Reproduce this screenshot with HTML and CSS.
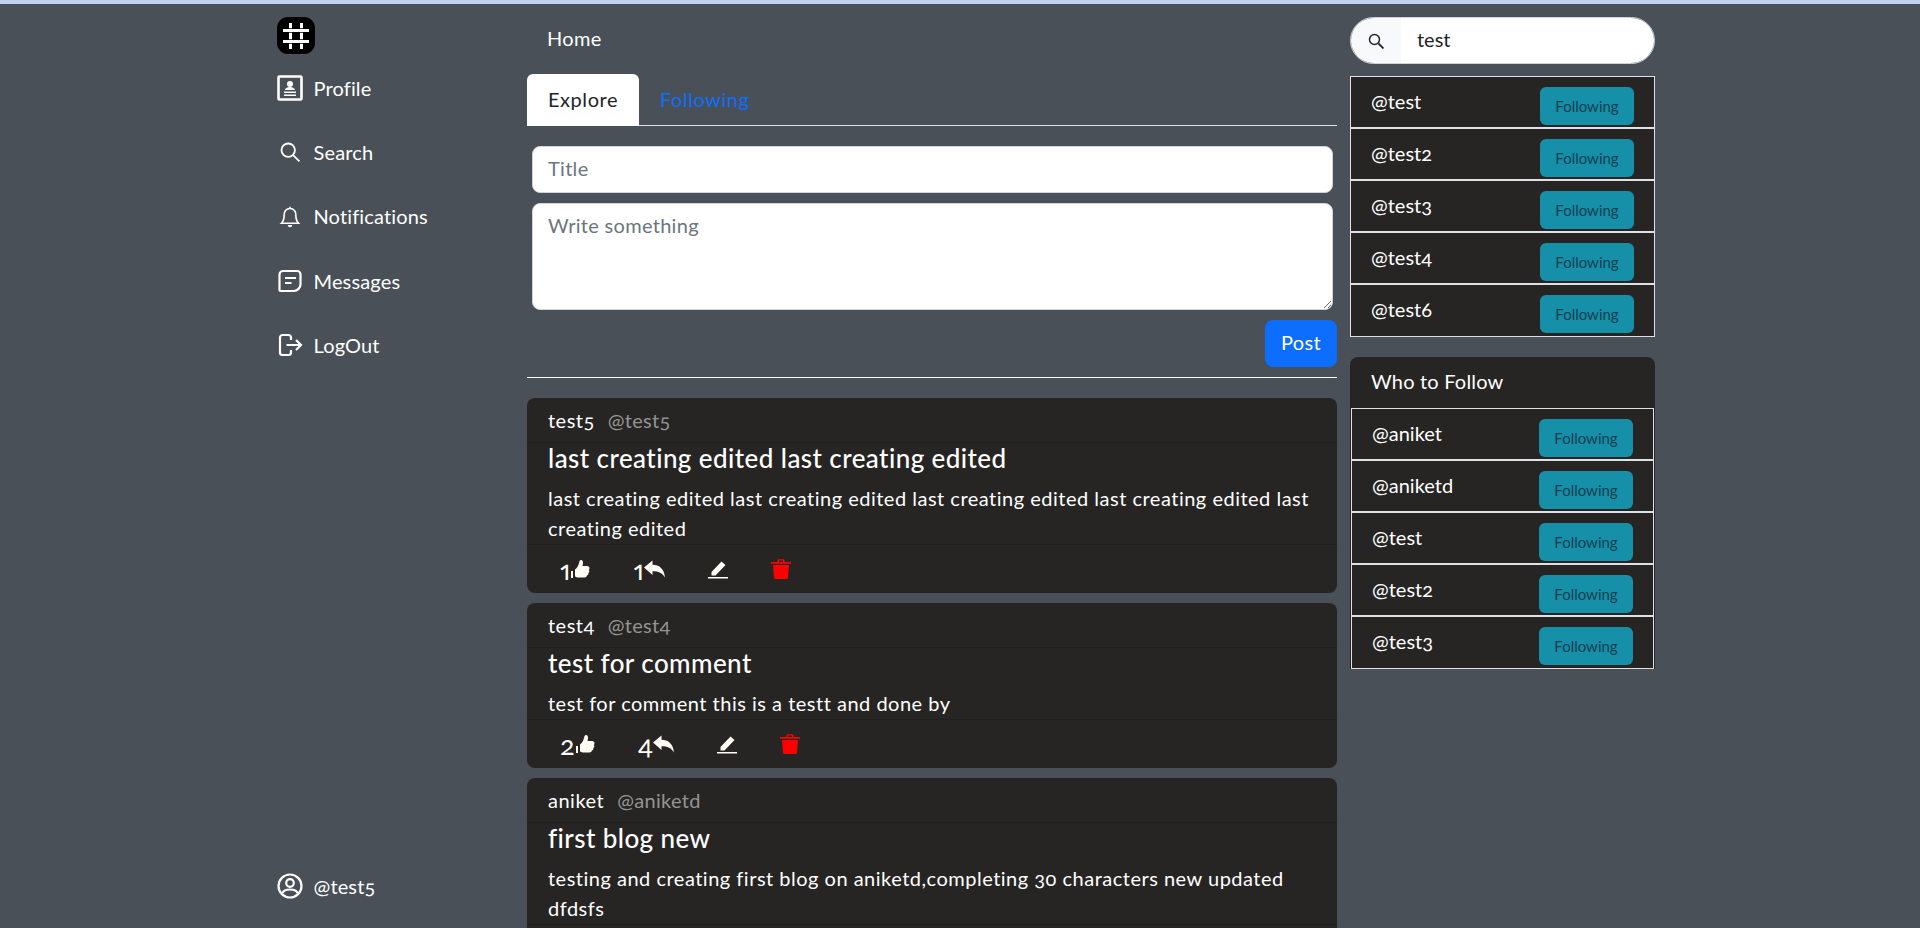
FILE: index.html
```html
<!DOCTYPE html>
<html>
  <head>
    <title>Home</title>
    <link rel="stylesheet" href="styles.css">
  </head>
  <body>
    <div class="topstrip"></div>
    <div class="layout">
      <nav class="sidebar">
        <div class="logo">
          <svg viewBox="0 0 38 38" width="38" height="38"><path d="M13.500 6v26M24.500 6v26" stroke="#fff" stroke-width="3" fill="none"/><path d="M5 13.500h28M5 24.500h28" stroke="#000" stroke-width="4.400" fill="none"/><path d="M6 13.500h26M6 24.500h26" stroke="#fff" stroke-width="3" fill="none"/></svg>
        </div>
        <a class="navitem">
          <svg viewBox="0 0 26 26" width="26" height="26"><rect x="1.500" y="1.500" width="23" height="23" fill="none" stroke="#fff" stroke-width="2.600" rx="1"/><circle cx="13" cy="9" r="3" fill="#fff"/><path d="M8 15c0-2 3-3 5-3s5 1 5 3zM7 16.500h12v1.500H7zM7 19.500h12v1.500H7z" fill="#fff"/></svg>
          <span>Profile</span>
        </a>
        <a class="navitem">
          <svg viewBox="-1.500 -1.500 29 29" width="26" height="26"><circle cx="11" cy="11" r="7.500" fill="none" stroke="#fff" stroke-width="2"/><path d="M16.500 16.500l7 7" stroke="#fff" stroke-width="2" fill="none"/></svg>
          <span>Search</span>
        </a>
        <a class="navitem">
          <svg viewBox="-1.500 -1.500 29 29" width="26" height="26"><path d="M13 3.500c-4 0-6.500 3-6.500 7 0 5-1 7.500-3 9.500h19c-2-2-3-4.500-3-9.500 0-4-2.500-7-6.500-7zM13 1.500v2" fill="none" stroke="#fff" stroke-width="1.800"/><path d="M10.500 22a2.500 2.500 0 0 0 5 0z" fill="#fff"/></svg>
          <span>Notifications</span>
        </a>
        <a class="navitem">
          <svg viewBox="0 0 26 26" width="26" height="26"><path d="M6 3h14a3.500 3.500 0 0 1 3.500 3.500v10c0 3-3 6.500-6.500 6.500H3.500a1 1 0 0 1-1-1V6.500A3.500 3.500 0 0 1 6 3z" fill="none" stroke="#fff" stroke-width="2.200"/><path d="M8 10h11M8 15h6.500" stroke="#fff" stroke-width="2.200" fill="none"/></svg>
          <span>Messages</span>
        </a>
        <a class="navitem">
          <svg viewBox="0 0 26 26" width="26" height="26"><path d="M14 8V5.500A2.500 2.500 0 0 0 11.500 3h-6A2.500 2.500 0 0 0 3 5.500v15A2.500 2.500 0 0 0 5.500 23h6a2.500 2.500 0 0 0 2.500-2.500V18M9.500 13h14.500M19 8l5 5-5 5" fill="none" stroke="#fff" stroke-width="2.200"/></svg>
          <span>LogOut</span>
        </a>
        <a class="navitem account">
          <svg viewBox="0 0 26 26" width="26" height="26"><circle cx="13" cy="13" r="11.500" fill="none" stroke="#fff" stroke-width="2.200"/><circle cx="13" cy="10" r="3.800" fill="none" stroke="#fff" stroke-width="2.200"/><path d="M5.500 20c1-2.500 4-3.500 7.500-3.500s6.500 1 7.500 3.500" fill="none" stroke="#fff" stroke-width="2.200"/></svg>
          <span>@test5</span>
        </a>
      </nav>

      <main class="feed">
        <div class="pagetitle">Home</div>
        <ul class="tabs">
          <li class="tab active">Explore</li>
          <li class="tab">Following</li>
        </ul>
        <form class="composer">
          <input class="field" type="text" placeholder="Title">
          <textarea class="field area" placeholder="Write something"></textarea>
          <div class="composer-foot"><button class="postbtn" type="button">Post</button></div>
        </form>
        <hr class="rule">

        <article class="card">
          <header class="card-head"><span class="author">test5</span><span class="handle">@test5</span></header>
          <div class="card-body">
            <h5>last creating edited last creating edited</h5>
            <p>last creating edited last creating edited last creating edited last creating edited last creating edited</p>
          </div>
          <footer class="card-foot">
            <span class="action">1<svg viewBox="0 0 20 20" width="20" height="20"><use href="#thumb"/></svg></span>
            <span class="action">1<svg viewBox="0 0 21 20" width="21" height="20"><use href="#reply"/></svg></span>
            <span class="action"><svg viewBox="0 0 20 20" width="20" height="20"><use href="#pen"/></svg></span>
            <span class="action"><svg viewBox="0 0 20 20" width="20" height="20"><use href="#trash"/></svg></span>
          </footer>
        </article>

        <article class="card">
          <header class="card-head"><span class="author">test4</span><span class="handle">@test4</span></header>
          <div class="card-body">
            <h5>test for comment</h5>
            <p>test for comment this is a testt and done by</p>
          </div>
          <footer class="card-foot">
            <span class="action">2<svg viewBox="0 0 20 20" width="20" height="20"><use href="#thumb"/></svg></span>
            <span class="action">4<svg viewBox="0 0 21 20" width="21" height="20"><use href="#reply"/></svg></span>
            <span class="action"><svg viewBox="0 0 20 20" width="20" height="20"><use href="#pen"/></svg></span>
            <span class="action"><svg viewBox="0 0 20 20" width="20" height="20"><use href="#trash"/></svg></span>
          </footer>
        </article>

        <article class="card">
          <header class="card-head"><span class="author">aniket</span><span class="handle">@aniketd</span></header>
          <div class="card-body">
            <h5>first blog new</h5>
            <p>testing and creating first blog on aniketd,completing 30 characters new updated dfdsfs</p>
          </div>
          <footer class="card-foot"></footer>
        </article>
      </main>

      <aside class="rightbar">
        <div class="searchbox">
          <span class="searchicon"><svg viewBox="0 0 16 16" width="16" height="16"><circle cx="6.500" cy="6.500" r="5" fill="none" stroke="#212529" stroke-width="1.500"/><path d="M10.500 10.500l5 5" stroke="#212529" stroke-width="1.800"/></svg></span>
          <input class="searchinput" type="text" value="test">
        </div>
        <ul class="userlist">
          <li class="userrow"><span>@test</span><button class="followbtn" type="button">Following</button></li>
          <li class="userrow"><span>@test2</span><button class="followbtn" type="button">Following</button></li>
          <li class="userrow"><span>@test3</span><button class="followbtn" type="button">Following</button></li>
          <li class="userrow"><span>@test4</span><button class="followbtn" type="button">Following</button></li>
          <li class="userrow"><span>@test6</span><button class="followbtn" type="button">Following</button></li>
        </ul>
        <section class="whocard">
          <div class="whotitle">Who to Follow</div>
          <ul class="userlist inner">
            <li class="userrow"><span>@aniket</span><button class="followbtn" type="button">Following</button></li>
            <li class="userrow"><span>@aniketd</span><button class="followbtn" type="button">Following</button></li>
            <li class="userrow"><span>@test</span><button class="followbtn" type="button">Following</button></li>
            <li class="userrow"><span>@test2</span><button class="followbtn" type="button">Following</button></li>
            <li class="userrow"><span>@test3</span><button class="followbtn" type="button">Following</button></li>
          </ul>
        </section>
      </aside>
    </div>

    <svg class="defs" width="0" height="0">
      <symbol id="thumb" viewBox="0 0 20 20"><path d="M1 12h2v7H1z" fill="#fffdf5"/><path d="M5 10.500c2-1.500 3.500-4 4-6.500.300-2 1-3 2-3 1.500 0 2.200 1.500 2 3.500l-.5 2.500h4.500c1.500 0 2.500 1 2.500 2.200 0 .8-.3 1.300-.7 1.700.4.500.6 1 .5 1.600-.1.700-.5 1.200-1 1.500.2.600.1 1.200-.3 1.700-.3.400-.7.700-1.200.8 0 1.300-1 2-2.300 2H9c-1.800 0-3-.5-4-1z" fill="#fffdf5"/></symbol>
      <symbol id="reply" viewBox="0 0 21 20"><path d="M0 8.500L8.500 1.500v4.300c6.500 0 11.500 3.500 12.500 12.700-2.500-4.500-6.500-6.300-12.500-6.300v3.800z" fill="#fffdf5"/></symbol>
      <symbol id="pen" viewBox="0 0 20 20"><path d="M3.500 13L13.500 2.500l4 3.500-10 10.500H3.500zM0 18h20v1.500H0z" fill="#fffdf5"/></symbol>
      <symbol id="trash" viewBox="0 0 20 20"><path d="M0 3h6.500V1.800C6.500 .8 7 .3 8 .3h4c1 0 1.500 .5 1.500 1.500V3H20v1.800H0zM8 1.600V3h4V1.600z" fill="#f00"/><path d="M2 6h16l-1 12.500c-.1 1-.7 1.500-1.500 1.500h-11c-.8 0-1.400-.5-1.500-1.500z" fill="#f00"/></symbol>
    </svg>
  </body>
</html>
```

FILE: styles.css
```css
* {
  box-sizing: border-box;
}

html, body {
  height: 928px;
  overflow: hidden;
}

body {
  margin: 0;
  background-color: #495057;
  color: #fff;
  font-family: "Lato", "Open Sans", sans-serif;
  font-size: 20px;
  font-variant-numeric: oldstyle-nums;
}

.topstrip {
  height: 4px;
  background-color: #bed3f0;
}

.defs {
  position: absolute;
}

.layout {
  width: 1390px;
  margin: 0 auto;
  display: grid;
  grid-template-columns: 262px 810px 318px;
  height: 924px;
}

/* left nav */
.sidebar {
  display: flex;
  flex-direction: column;
  padding: 13px 12px 0 12px;
  height: 100%;
}

.logo {
  width: 38px;
  height: 37px;
  background-color: #000;
  border-radius: 11px;
  margin-bottom: 2px;
  display: flex;
  align-items: center;
  justify-content: center;
}

.navitem {
  display: flex;
  align-items: center;
  gap: 10.500px;
  height: 64.300px;
  letter-spacing: 0.15px;
}

.navitem span {
  padding-bottom: 1px;
}

.navitem svg {
  flex: none;
}

.account {
  margin-top: auto;
  margin-bottom: 10px;
  height: 64px;
}

/* middle */
.feed {
  overflow: hidden;
  letter-spacing: 0.3px;
}

.pagetitle {
  padding: 22px 20px 0;
  height: 70px;
  line-height: 24px;
}

.tabs {
  list-style: none;
  margin: 0;
  padding: 0;
  display: flex;
  border-bottom: 1px solid #dee2e6;
  height: 52px;
}

.tab {
  padding: 0 21px;
  height: 52px;
  line-height: 50px;
  color: #0d6efd;
  letter-spacing: 0.55px;
}

.tab.active {
  background-color: #fff;
  color: #212529;
  border-radius: 6px 6px 0 0;
}

.composer {
  padding: 20px 4px 0 5px;
}

.field {
  display: block;
  width: 100%;
  height: 47px;
  border: 1px solid #ced4da;
  border-radius: 8px;
  padding: 0 15px 4px;
  font-family: inherit;
  font-size: 20px;
  letter-spacing: 0.3px;
  color: #212529;
  margin-bottom: 10px;
}

.field::placeholder {
  color: #6c757d;
}

.area {
  height: 107px;
  padding-top: 9px;
  resize: vertical;
}

.composer-foot {
  display: flex;
  justify-content: flex-end;
  margin-right: -4px;
}

.postbtn {
  width: 72px;
  height: 47px;
  border: 0;
  border-radius: 8px;
  padding: 0 0 4px;
  background-color: #0d6efd;
  color: #fff;
  font-family: inherit;
  font-size: 20px;
  letter-spacing: 0.3px;
}

.rule {
  border: 0;
  border-top: 1px solid #fff;
  margin: 10px 0 20px;
}

.card {
  background-color: #262524;
  border-radius: 8px;
  margin-bottom: 10px;
}

.card-head {
  height: 45px;
  padding: 0 21px;
  display: flex;
  align-items: center;
  gap: 13px;
  border-bottom: 1px solid #1f1f1e;
}

.author {
  letter-spacing: 0.5px;
}

.handle {
  color: #949492;
}

.card-body {
  padding: 0 21px;
}

.card-body h5 {
  margin: 0 0 10px;
  font-size: 26px;
  font-weight: 500;
  line-height: 30px;
  letter-spacing: 0.42px;
}

.card-body p {
  margin: 0;
  line-height: 30px;
  padding-bottom: 1px;
  letter-spacing: 0.5px;
}

.card-foot {
  height: 49px;
  border-top: 1px solid #1f1f1e;
  padding: 0 0 0 33px;
  display: flex;
  align-items: center;
  gap: 43px;
}

.action {
  display: flex;
  align-items: center;
  color: #fffdf5;
  font-size: 27px;
  line-height: 1;
  font-variant-numeric: oldstyle-nums proportional-nums;
  letter-spacing: 0;
}

/* right */
.rightbar {
  padding: 13px 0 0 13px;
}

.searchbox {
  display: flex;
  height: 47px;
  border-radius: 24px;
  border: 1px solid #ced4da;
  overflow: hidden;
  margin-bottom: 12px;
}

.searchicon {
  width: 50px;
  background-color: #f8f9fa;
  display: flex;
  align-items: center;
  justify-content: center;
}

.searchinput {
  flex: 1;
  min-width: 0;
  border: 0;
  padding: 0 16px 3px;
  font-family: inherit;
  font-size: 20px;
  color: #212529;
  font-variant-numeric: oldstyle-nums;
}

.userlist {
  list-style: none;
  margin: 0;
  padding: 0;
  border: 1px solid #dee2e6;
  border-bottom-width: 0;
  background-color: #262524;
}

.userrow {
  height: 52px;
  padding: 10px 20px 0 20px;
  display: flex;
  justify-content: space-between;
  align-items: flex-start;
  border-bottom: 2px solid #dee2e6;
  line-height: 25px;
}

.userrow span {
  margin-top: 2px;
}

.userrow:last-child {
  border-bottom-width: 1px;
}

.followbtn {
  width: 94px;
  height: 38px;
  border: 0;
  border-radius: 6px;
  padding: 0;
  background-color: #168fa9;
  color: #12404f;
  font-family: inherit;
  font-size: 15px;
}

.whocard {
  margin-top: 20px;
  background-color: #262524;
  border-radius: 8px 8px 0 0;
}

.whotitle {
  height: 51px;
  padding: 0 21px;
  line-height: 49px;
  letter-spacing: 0.2px;
}

.inner {
  margin: 0 1px;
}
```
